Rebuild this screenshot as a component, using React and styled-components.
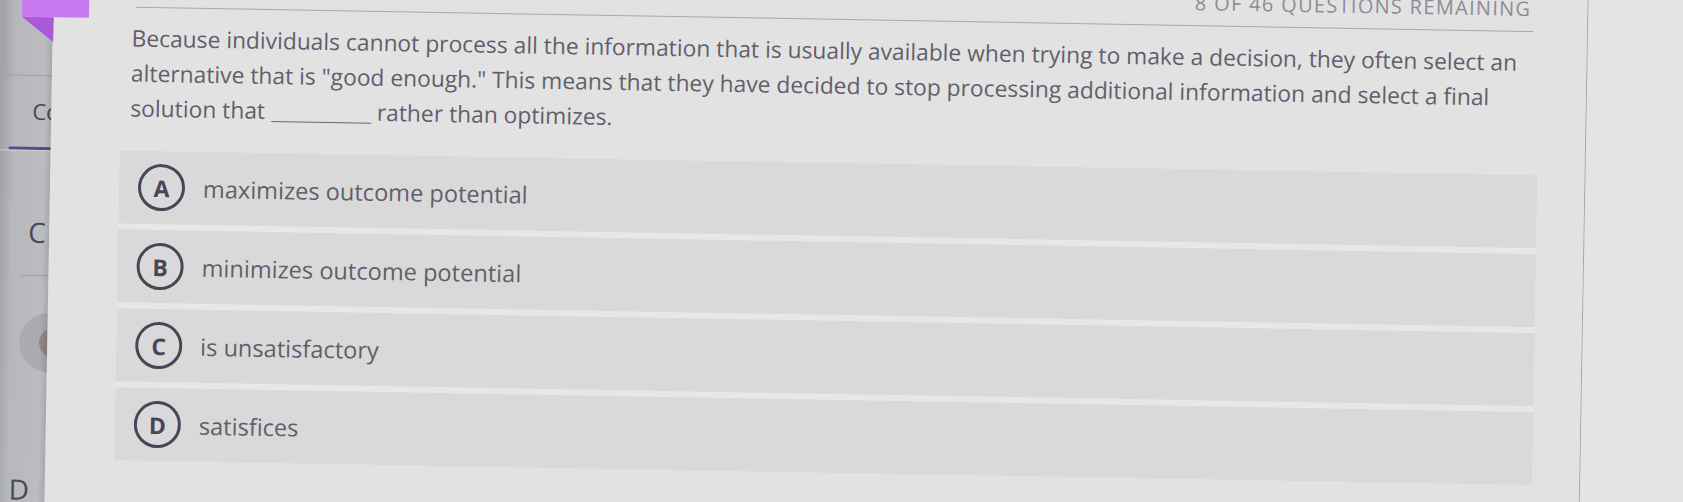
import React from "react";
import styled, { createGlobalStyle } from "styled-components";

const GlobalStyle = createGlobalStyle`
    html, body {
        margin: 0;
        padding: 0;
        background: #dfdfdf;
    }
    #root {
        display: flow-root;
        width: 1683px;
        height: 502px;
        overflow: hidden;
    }
`;

const textColor = "#625e6c";
const inkColor = "#4a4556";

// the photo is tilted about one degree, so the whole sheet is turned a little
const Stage = styled.div`
    position: relative;
    display: flex;
    width: 1723px;
    height: 542px;
    margin: -20px;
    transform: rotate(1deg);
    transform-origin: 50% 50%;
    font-family: "Open Sans", "Noto Sans", sans-serif;
`;

const Sidebar = styled.aside`
    flex: 0 0 69px;
    box-sizing: border-box;
    padding: 20px 0 0 20px;
    overflow: hidden;
    display: flex;
    flex-direction: column;
    background: linear-gradient(to right, #a2a4a7 20px, #b7b8bb 32px, #bcbdc0 100%);
`;

const SideTop = styled.div`
    flex-shrink: 0;
    height: 89px;
    margin-left: -20px;
    border-bottom: 1px solid #a0a1a4;
`;

const SideLabel = styled.div`
    flex-shrink: 0;
    margin: ${({ $top }) => $top}px 0 0 ${({ $left }) => $left}px;
    font-size: ${({ $size }) => $size}px;
    line-height: ${({ $size }) => $size + 4}px;
    color: #4b4853;
    white-space: nowrap;
`;

const SideAccent = styled.div`
    flex-shrink: 0;
    width: 45px;
    height: 3px;
    margin: 23.5px 0 0 7px;
    background: #5a4a8c;
`;

const SideRule = styled.div`
    flex-shrink: 0;
    height: 1px;
    margin: ${({ $top }) => $top}px 0 0 ${({ $left }) => $left}px;
    background: ${({ $color }) => $color};
`;

const Avatar = styled.div`
    flex-shrink: 0;
    width: 59px;
    height: 59px;
    margin: 37px 0 0 21px;
    border-radius: 50%;
    background: radial-gradient(circle at 60% 50%, #978581 0 15px, #aaabaf 16px);
`;

const TabTop = styled.div`
    position: absolute;
    left: 38px;
    top: 0;
    width: 67px;
    height: 51px;
    background: #c97af0;
    z-index: 2;
`;

const TabFold = styled.div`
    position: absolute;
    left: 38px;
    top: 51px;
    width: 32px;
    height: 25px;
    background: #a85ad8;
    clip-path: polygon(0 0, 100% 0, 100% 100%);
    z-index: 2;
`;

const Card = styled.main`
    flex: 0 0 1534px;
    position: relative;
    z-index: 1;
    box-sizing: border-box;
    padding-top: 20px;
    background: #e2e2e2;
    box-shadow: -3px 0 5px rgba(0, 0, 0, 0.12);
`;

const Column = styled.div`
    width: 1418px;
    margin-left: 69px;
    display: flex;
    flex-direction: column;
`;

const Header = styled.div`
    margin: -13px 7px 0 14px;
    padding: 0 2px 12px 0;
    border-bottom: 1px solid #a9a9ad;
    text-align: right;
    font-size: 20px;
    line-height: 20px;
    letter-spacing: 1.3px;
    text-transform: uppercase;
    color: #8e8b96;
`;

const Question = styled.p`
    width: 1408px;
    margin: 13px 0 0 10px;
    font-size: 22.8px;
    line-height: 35px;
    color: ${textColor};
`;

const Blank = styled.span`
    display: inline-block;
    width: 100px;
    border-bottom: 1.5px solid #6a6570;
    vertical-align: -3px;
`;

const OptionList = styled.ol`
    list-style: none;
    margin: 25px 0 0;
    padding: 0;
    display: flex;
    flex-direction: column;
    gap: 6px;
    background: #e7e7e7;
`;

const OptionRow = styled.li`
    height: 73px;
    box-sizing: border-box;
    display: flex;
    align-items: center;
    gap: 18px;
    padding-left: 19px;
    background: #d9d9d9;
`;

const Letter = styled.span`
    flex-shrink: 0;
    width: 47px;
    height: 47px;
    box-sizing: border-box;
    border: 3px solid ${inkColor};
    border-radius: 50%;
    display: flex;
    align-items: center;
    justify-content: center;
    font-size: 23px;
    font-weight: 700;
    color: ${inkColor};
`;

const OptionText = styled.span`
    font-size: 23.6px;
    color: ${textColor};
`;

const RightPanel = styled.div`
    flex: 1;
    border-left: 1px solid #a7a7a9;
    background: #e4e4e4;
`;

const options = [
    { letter: "A", text: "maximizes outcome potential" },
    { letter: "B", text: "minimizes outcome potential" },
    { letter: "C", text: "is unsatisfactory" },
    { letter: "D", text: "satisfices" },
];

const App = () => (
    <>
        <GlobalStyle />
        <Stage>
            <TabTop />
            <TabFold />
            <Sidebar>
                <SideTop />
                <SideLabel $top={21.5} $left={30} $size={22}>
                    Co
                </SideLabel>
                <SideAccent />
                <SideRule $top={0} $left={-20} $color="#d1d1d4" />
                <SideLabel $top={65} $left={28} $size={28}>
                    C
                </SideLabel>
                <SideRule $top={27} $left={22} $color="#9c9da1" />
                <Avatar />
                <SideLabel $top={101} $left={13} $size={28}>
                    D
                </SideLabel>
            </Sidebar>
            <Card>
                <Column>
                    <Header>8 of 46 questions remaining</Header>
                    <Question>
                        Because individuals cannot process all the information that is usually
                        available when trying to make a decision, they often select an alternative
                        that is "good enough." This means that they have decided to stop processing
                        additional information and select a final solution that <Blank /> rather
                        than optimizes.
                    </Question>
                    <OptionList>
                        {options.map((option) => (
                            <OptionRow key={option.letter}>
                                <Letter>{option.letter}</Letter>
                                <OptionText>{option.text}</OptionText>
                            </OptionRow>
                        ))}
                    </OptionList>
                </Column>
            </Card>
            <RightPanel />
        </Stage>
    </>
);

export default App;
